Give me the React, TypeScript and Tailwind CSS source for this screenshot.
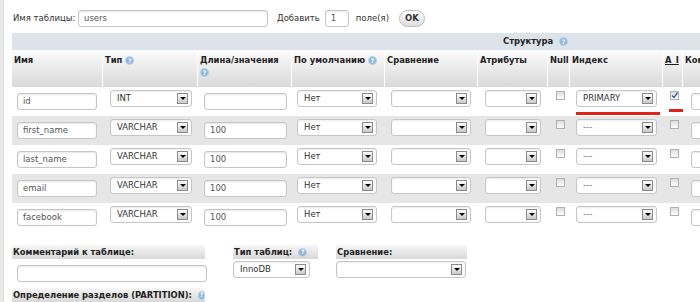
import React from "react";

const Help = () => (
  <span className="inline-flex w-[9px] h-[9px] rounded-full bg-[#8db6dc] border border-[#b8d3ec] items-center justify-center text-white text-[6px] font-bold leading-none align-middle">
    ?
  </span>
);

const Arrow = () => (
  <span className="w-[11px] h-[11px] border border-[#8a8a8a] bg-gradient-to-b from-white to-[#c8c8c8] flex items-center justify-center shrink-0">
    <span className="w-0 h-0 border-l-[3px] border-r-[3px] border-t-[3px] border-l-transparent border-r-transparent border-t-black" />
  </span>
);

const Select = ({ w, value }: { w: number; value?: string }) => (
  <div
    className="h-[17px] border border-[#c6c6c6] rounded-[3px] bg-white flex items-center justify-between pl-[6px] pr-[3px] text-[8.5px] text-[#333] whitespace-nowrap shadow-[inset_0_1px_2px_rgba(0,0,0,0.08)]"
    style={{ width: w }}
  >
    <span className={value === "---" ? "text-[#777]" : ""}>{value ?? ""}</span>
    <Arrow />
  </div>
);

const Input = ({ w, value }: { w: number; value?: string }) => (
  <div
    className="h-[17px] border border-[#c6c6c6] rounded-[3px] bg-white flex items-center pl-[5px] text-[8.5px] text-[#555] whitespace-nowrap shadow-[inset_0_1px_2px_rgba(0,0,0,0.1)]"
    style={{ width: w }}
  >
    {value ?? ""}
  </div>
);

const Check = ({ checked }: { checked?: boolean }) => (
  <span className="w-[9px] h-[9px] border border-[#b0b0b0] bg-gradient-to-b from-[#dcdcdc] to-white flex items-center justify-center">
    {checked && (
      <svg width="7" height="7" viewBox="0 0 7 7">
        <path d="M1 3.5 L3 5.5 L6.5 0.5" stroke="#2a4aa8" strokeWidth="1.3" fill="none" />
      </svg>
    )}
  </span>
);

const cols = [91, 95, 94, 93, 93, 70, 22, 93, 20, 60];

const rows = [
  { name: "id", type: "INT", len: "", idx: "PRIMARY", ai: true },
  { name: "first_name", type: "VARCHAR", len: "100", idx: "---" },
  { name: "last_name", type: "VARCHAR", len: "100", idx: "---" },
  { name: "email", type: "VARCHAR", len: "100", idx: "---" },
  { name: "facebook", type: "VARCHAR", len: "100", idx: "---" },
];

const SectionHead = ({ w, children }: { w: number; children: React.ReactNode }) => (
  <div
    className="h-[14px] shrink-0 flex items-center gap-[6px] pl-[1px] text-[8.4px] font-bold text-[#222] whitespace-nowrap bg-gradient-to-b from-[#f7f7f7] to-[#d8d8d8] rounded-tr-[3px]"
    style={{ width: w }}
  >
    {children}
  </div>
);

export default function App() {
  return (
    <div className="w-[700px] h-[302px] overflow-hidden bg-white flex font-['DejaVu_Sans',Verdana,sans-serif] text-[#333]">
      <div className="w-[4px] shrink-0 bg-[#e9e9e9] border-r border-[#dcdcdc]" />
      <div className="flex-1 pl-[8px] pt-[10px] min-w-0 flex flex-col">
        {/* top line */}
        <div className="flex items-center h-[17px] shrink-0 text-[8.5px] text-[#333] whitespace-nowrap">
          <span className="ml-[1px] w-[65px]">Имя таблицы:</span>
          <Input w={190} value="users" />
          <span className="ml-[9px]">Добавить</span>
          <span className="ml-[5px]"><Input w={24} value="1" /></span>
          <span className="ml-[7px]">поле(я)</span>
          <span className="ml-[10px] h-[17px] px-[5px] rounded-full border border-[#bbb] bg-gradient-to-b from-white to-[#dedede] text-[8.5px] font-bold flex items-center">
            OK
          </span>
        </div>

        {/* structure bar */}
        <div className="mt-[6px] h-[17px] w-[720px] shrink-0 bg-[#dde3ea] flex items-center pl-[491px] gap-[6px] text-[8.4px] font-bold text-[#222]">
          Структура <Help />
        </div>

        {/* header row */}
        <div className="flex mt-[1px] h-[36px] w-[760px] shrink-0">
          {[
            <>Имя</>,
            <>Тип <Help /></>,
            <>Длина/значения<br /><Help /></>,
            <>По умолчанию <Help /></>,
            <>Сравнение</>,
            <>Атрибуты</>,
            <>Null</>,
            <>Индекс</>,
            <span className="underline">A_I</span>,
            <>Комментарии</>,
          ].map((c, i) => (
            <div
              key={i}
              className="border-r border-white bg-gradient-to-b from-[#fbfbfb] to-[#d9d9d9] pl-[2px] pt-[3px] text-[8.4px] font-bold text-[#222] leading-[12px] whitespace-nowrap overflow-hidden"
              style={{ width: cols[i] }}
            >
              {c}
            </div>
          ))}
        </div>

        {/* data rows */}
        {rows.map((r, ri) => (
          <div
            key={ri}
            className={`flex w-[760px] h-[29px] shrink-0 ${ri % 2 === 1 ? "bg-[#e6e6e6]" : "bg-white"}`}
          >
            <div className="pl-[5px] pt-[6px]" style={{ width: cols[0] }}>
              <Input w={80} value={r.name} />
            </div>
            <div className="pl-[7px] pt-[3px]" style={{ width: cols[1] }}>
              <Select w={82} value={r.type} />
            </div>
            <div className="pl-[6px] pt-[6px]" style={{ width: cols[2] }}>
              <Input w={83} value={r.len} />
            </div>
            <div className="pl-[5px] pt-[3px]" style={{ width: cols[3] }}>
              <Select w={80} value="Нет" />
            </div>
            <div className="pl-[6px] pt-[3px]" style={{ width: cols[4] }}>
              <Select w={80} />
            </div>
            <div className="pl-[7px] pt-[3px]" style={{ width: cols[5] }}>
              <Select w={56} />
            </div>
            <div className="pl-[8px] pt-[4px]" style={{ width: cols[6] }}>
              <Check />
            </div>
            <div className="pl-[6px] pt-[3px] flex flex-col" style={{ width: cols[7] }}>
              <Select w={81} value={r.idx} />
              {ri === 0 && <div className="mt-[5px] w-[84px] h-[3px] bg-[#e0241b]" />}
            </div>
            <div className="pl-[7px] pt-[4px] flex flex-col" style={{ width: cols[8] }}>
              <Check checked={r.ai} />
              {ri === 0 && <div className="mt-[9px] -ml-[1px] w-[14px] h-[3px] bg-[#e0241b]" />}
            </div>
            <div className="pl-[8px] pt-[6px]" style={{ width: cols[9] }}>
              <Input w={50} />
            </div>
          </div>
        ))}

        {/* bottom section */}
        <div className="flex mt-[13px] shrink-0">
          <div className="flex flex-col w-[195px]">
            <SectionHead w={193}>Комментарий к таблице:</SectionHead>
            <div className="mt-[6px] ml-[5px]">
              <Input w={190} />
            </div>
          </div>
          <div className="flex flex-col ml-[26px]">
            <SectionHead w={85}>
              Тип таблиц: <Help />
            </SectionHead>
            <div className="mt-[2px]">
              <Select w={77} value="InnoDB" />
            </div>
          </div>
          <div className="flex flex-col ml-[18px]">
            <SectionHead w={131}>Сравнение:</SectionHead>
            <div className="mt-[2px]">
              <Select w={130} />
            </div>
          </div>
        </div>
        <div className="mt-[6px] shrink-0">
          <SectionHead w={193}>
            Определение разделов (PARTITION): <Help />
          </SectionHead>
        </div>
      </div>
    </div>
  );
}
